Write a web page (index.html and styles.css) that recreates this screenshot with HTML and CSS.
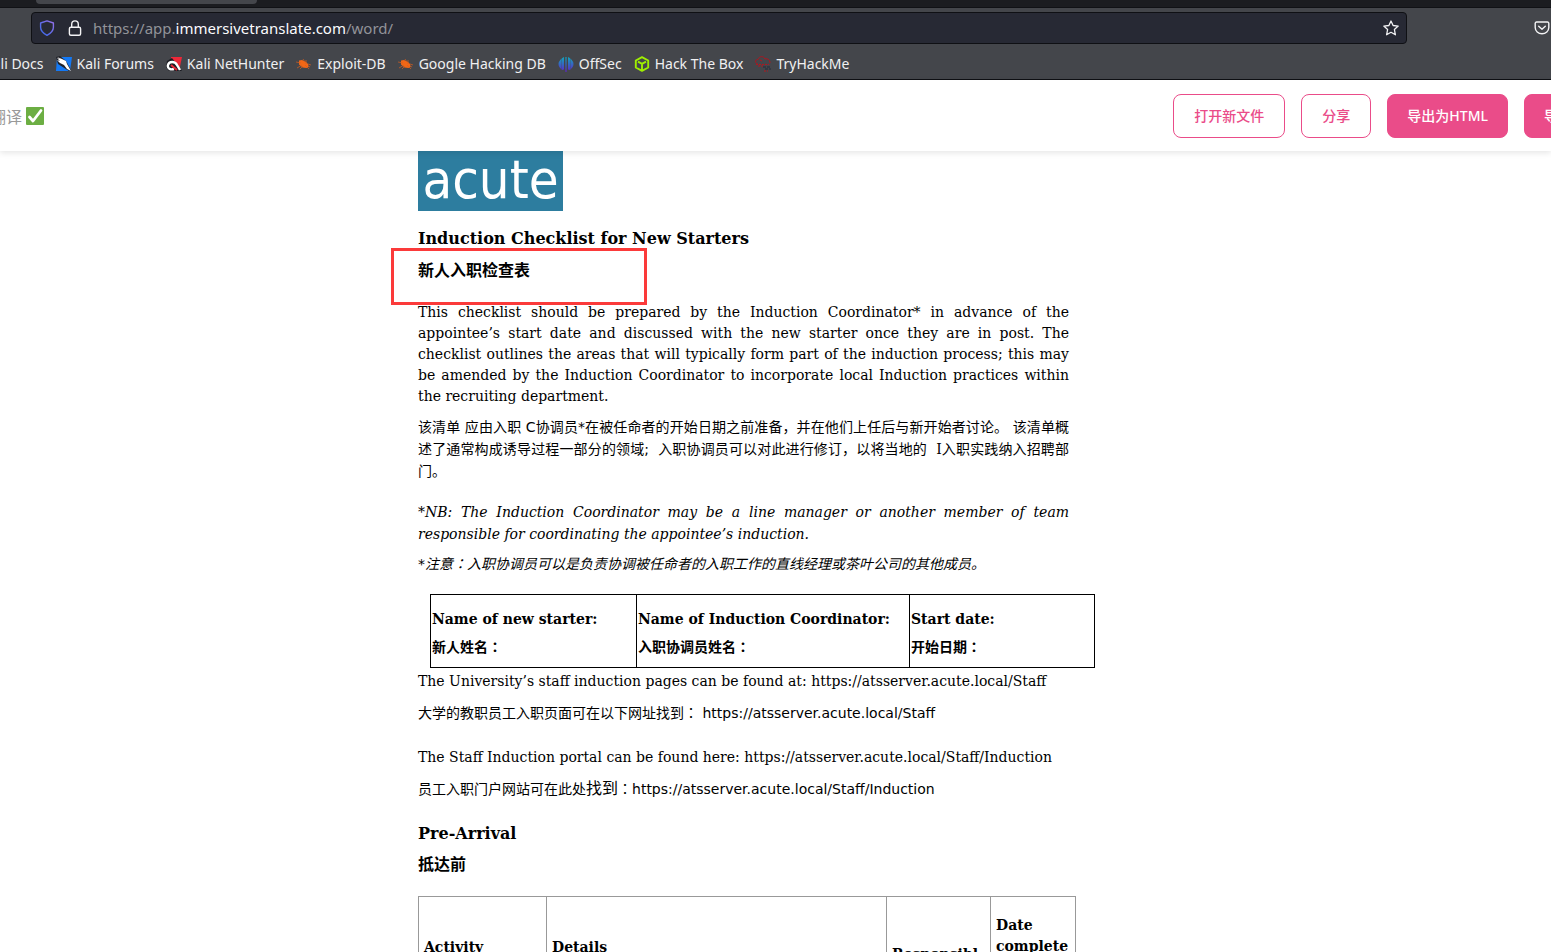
FILE: index.html
```html
<!DOCTYPE html>
<html lang="zh-CN">
<head>
<meta charset="utf-8">
<title>Word 翻译</title>
<link rel="stylesheet" href="styles.css">
</head>
<body>
<div class="browser">
  <div class="tab-strip"><div class="tab"></div></div>
  <div class="nav-bar">
    <div class="url-bar">
      <svg class="icon" viewBox="0 0 16 16" fill="none" stroke="url(#shield)" stroke-width="1.4" stroke-linejoin="round"><defs><linearGradient id="shield" x1="0" y1="1" x2="1" y2="0"><stop stop-color="#3568e8"/><stop offset="1" stop-color="#9470e8"/></linearGradient></defs><path d="M8 .9 14.4 3v4.2c0 3.700-2.500 6-6.400 8.200C4.100 13.200 1.600 10.900 1.600 7.200V3z"/></svg>
      <svg class="icon lock" viewBox="0 0 16 16" fill="none" stroke="#f3f3f5" stroke-width="1.400"><rect x="2.400" y="7.200" width="11.200" height="8" rx="1.500"/><path d="M4.700 7V4.200a3.300 3.300 0 0 1 6.600 0V7"/></svg>
      <div class="url">https://app.<span class="host">immersivetranslate.com</span>/word/</div>
      <button class="icon-button" aria-label="Bookmark"><svg class="icon" viewBox="0 0 16 16" fill="none" stroke="#f3f3f5" stroke-width="1.300" stroke-linejoin="round"><path d="m8 1 2.100 4.500 5.100.6-3.800 3.400 1 5.300L8 12.300l-4.400 2.500 1-5.300L.8 6.100l5.100-.6z"/></svg></button>
    </div>
    <button class="icon-button pocket" aria-label="Pocket"><svg class="icon" viewBox="0 0 16 16" fill="none" stroke="#f3f3f5" stroke-width="1.400" stroke-linecap="round" stroke-linejoin="round"><path d="M2.500 2h11a1.300 1.300 0 0 1 1.300 1.300v4.200a6.800 6.300 0 0 1-13.600 0V3.300A1.300 1.300 0 0 1 2.500 2z"/><path d="m4.700 6.200 3.300 3 3.300-3"/></svg></button>
  </div>
  <nav class="bookmarks">
    <a href="#">Kali Docs</a>
    <a href="#"><svg class="icon" viewBox="0 0 16 16"><path fill="#1479f5" d="M1 1h15l-2 14H0z"/><path fill="#222329" d="m0 1 4-1 6 5 5 9-2 1L2 8z"/><path fill="#fff" d="m1 1 5 2 4 2 1 3 4 7-4-2-3-4-4-2-3-3 3 1-3-3 3 1z"/></svg>Kali Forums</a>
    <a href="#"><svg class="icon" viewBox="0 0 16 16"><path fill="#ed2839" d="M5 1h11l-3 14H5z"/><path fill="#1b1c22" d="m1 5 5-3 10 13H3l-3-4z"/><path fill="none" stroke="#fff" stroke-width="2.400" d="m14 14-3-5C9 5 3 5 2 9s3 5 6 4"/><path fill="none" stroke="#ed2839" stroke-width="2" d="m5 9 6 5"/></svg>Kali NetHunter</a>
    <a href="#"><svg class="icon" viewBox="0 0 16 16"><g id="bug"><path fill="#f26716" d="M3 4.500 6 4l4 2 2 2 .5 3-2 1-4-.5-3.500-3z"/><path stroke="#d95e1c" stroke-width=".7" d="m0 6 5 1M1 12l5-3M4 13l3-3M7 3l2 3M10 4v4M9 9l4 4M12 8l3 1M12 10l2 1"/></g></svg>Exploit-DB</a>
    <a href="#"><svg class="icon" viewBox="0 0 16 16"><use href="#bug"/></svg>Google Hacking DB</a>
    <a href="#"><svg class="icon" viewBox="0 0 16 16"><defs><linearGradient id="off" x1="0" y1="0" x2="0" y2="1"><stop stop-color="#10a6bd"/><stop offset="1" stop-color="#5f22c9"/></linearGradient></defs><path fill="url(#off)" d="M4 2.200 6 1v12.500L4 14C2 12 .5 10.500.5 8S2 4 4 2.200zM7.400 1h1.200v15H7.400zM10 1l2 1.200c2 1.800 3.500 3.300 3.500 5.800s-1.500 4-3.500 6l-2-.5z"/><path stroke="#44464b" stroke-width=".3" d="M3.500 2v12M12.500 2v12"/></svg>OffSec</a>
    <a href="#"><svg class="icon" viewBox="0 0 16 16" fill="none" stroke="#9fef00" stroke-width="1.900" stroke-linejoin="round"><path d="m8 1.200 6.200 3.300v7L8 14.900l-6.200-3.400v-7zM4 5.700l4 2.200 4-2.200M8 8v6"/></svg>Hack The Box</a>
    <a href="#"><svg class="icon" viewBox="0 0 16 16" fill="none"><path stroke="#b2141e" d="M2.500 7.500C-.5 7 0 3.500 3 3.500 4-.2 9-.2 10 3c3-.8 5 1 5 4M5 4l2 1"/><path stroke="#b2141e" stroke-dasharray="2 1" d="M1 8.500h13M3 10h5M9 15h4"/><path stroke="#252a3a" stroke-dasharray="3 1" d="M8 11h7M10 13h6"/></svg>TryHackMe</a>
  </nav>
</div>

<header class="site-header">
  <div class="status">已翻译 <svg class="check" viewBox="0 0 18 18" aria-label="完成"><rect width="18" height="18" rx="1" fill="#6cae43"/><path fill="none" stroke="#fff" stroke-width="2.800" stroke-linecap="round" stroke-linejoin="round" d="m3.500 10 3.500 4 8-10.500"/></svg></div>
  <div class="actions">
    <button class="btn">打开新文件</button>
    <button class="btn">分享</button>
    <button class="btn primary">导出为HTML</button>
    <button class="btn primary last">导出为PDF</button>
  </div>
</header>

<main class="viewer">
  <article class="doc">
    <div class="logo"><span>acute</span></div>
    <div class="heading">
      <h1>Induction Checklist for New Starters</h1>
      <h1 class="zh">新人入职检查表</h1>
      <div class="marker"></div>
    </div>
    <p class="intro">This checklist should be prepared by the Induction Coordinator* in advance of the appointee’s start date and discussed with the new starter once they are in post. The checklist outlines the areas that will typically form part of the induction process; this may be amended by the Induction Coordinator to incorporate local Induction practices within the recruiting department.</p>
    <p class="zh intro-zh">该清单 应由入职 C协调员*在被任命者的开始日期之前准备，并在他们上任后与新开始者讨论。 该清单概述了通常构成诱导过程一部分的领域;&nbsp; 入职协调员可以对此进行修订，以将当地的&nbsp; <span class="serif">I</span>入职实践纳入招聘部门。</p>
    <p class="note"><em>*NB: The Induction Coordinator may be a line manager or another member of team responsible for coordinating the appointee’s induction.</em></p>
    <p class="zh note-zh"><em>*注意<span class="mid" lang="zh-TW">：</span>入职协调员可以是负责协调被任命者的入职工作的直线经理或茶叶公司的其他成员。</em></p>
    <table class="people">
      <colgroup><col class="starter"><col class="coordinator"><col></colgroup>
      <tr>
        <th><p>Name of new starter:</p><p class="zh">新人姓名<span class="mid" lang="zh-TW">：</span></p></th>
        <th><p>Name of Induction Coordinator:</p><p class="zh">入职协调员姓名<span class="mid" lang="zh-TW">：</span></p></th>
        <th><p>Start date:</p><p class="zh">开始日期<span class="mid" lang="zh-TW">：</span></p></th>
      </tr>
    </table>
    <p class="line">The University’s staff induction pages can be found at: https://atsserver.acute.local/Staff</p>
    <p class="zh line-zh">大学的教职员工入职页面可在以下网址找到<span class="mid" lang="zh-TW">：</span> https://atsserver.acute.local/Staff</p>
    <p class="line">The Staff Induction portal can be found here: https://atsserver.acute.local/Staff/Induction</p>
    <p class="zh line-zh">员工入职门户网站可在此处<span class="large">找到</span><span class="mid" lang="zh-TW">：</span>https://atsserver.acute.local/Staff/Induction</p>
    <h2>Pre-Arrival</h2>
    <h2 class="zh">抵达前</h2>
    <table class="tasks">
      <colgroup><col class="activity"><col><col class="owner"><col class="date"></colgroup>
      <tr><th class="level">Activity</th><th class="level">Details</th><th class="low">Responsibl</th><th>Date complete</th></tr>
    </table>
  </article>
</main>
</body>
</html>
```
FILE: styles.css
```css
* { box-sizing: border-box; }
body {
  margin: 0;
  height: 100vh;
  display: flex;
  flex-direction: column;
  overflow: hidden;
  background: #fff;
  color: #000;
}
button { font: inherit; cursor: pointer; }
.icon { width: 16px; height: 16px; flex: none; display: block; }

/* Browser chrome */
.browser {
  flex: none;
  background: #44464b;
  border-bottom: 1px solid #0f1014;
  font: 14px/20px "Noto Sans", sans-serif;
  color: #f0f0f1;
}
.tab-strip { height: 8px; background: #1b1c20; border-bottom: 1px solid #101115; padding-left: 36px; }
.tab { width: 221px; height: 4px; background: #44464b; border-radius: 0 0 4px 4px; }
.nav-bar { display: flex; align-items: center; padding: 4px 0 4px 31px; }
.url-bar {
  flex: 1;
  height: 32px;
  display: flex;
  align-items: center;
  padding: 0 7px;
  background: #272934;
  border: 1px solid #0f1014;
  border-radius: 4px;
}
.lock { margin: 0 10px 0 12px; }
.url { flex: 1; font-size: 15px; color: #929399; }
.host { color: #fbfbfe; }
.icon-button { padding: 0; border: 0; background: none; }
.pocket { margin: 0 1px 0 127px; }
.bookmarks { display: flex; gap: 12px; height: 31px; align-items: center; margin-left: -16px; white-space: nowrap; }
.bookmarks a { display: flex; align-items: center; gap: 5px; color: inherit; text-decoration: none; }

/* Site header */
.site-header {
  flex: none;
  position: relative;
  z-index: 1;
  height: 71px;
  display: flex;
  align-items: center;
  justify-content: space-between;
  background: #fff;
  box-shadow: 0 2px 6px rgba(0, 0, 0, .1);
  font-family: "Noto Sans", "Noto Sans CJK SC", sans-serif;
}
.status { display: flex; align-items: center; gap: 4px; margin-left: -26px; font-size: 16px; color: #999; }
.check { width: 18px; height: 18px; }
.actions { display: flex; gap: 16px; margin-right: -94px; }
.btn {
  height: 44px;
  padding: 0 20px 2px;
  border: 1px solid #ea4c89;
  border-radius: 8px;
  background: #fff;
  color: #ea4c89;
  font-size: 14px;
  font-weight: 500;
  white-space: nowrap;
}
.primary { padding: 0 19px 2px; background: #ea4c89; color: #fff; }
.last { width: 121px; text-align: left; }

/* Document */
.viewer { flex: 1; min-height: 0; overflow: hidden; padding-left: 418px; }
.doc { max-width: 651px; font: 14px/21px "DejaVu Serif", "Noto Sans CJK SC", serif; }
.doc p, .doc h1, .doc h2 { margin: 0; }
.doc h1, .doc h2 { font-size: 16px; line-height: 24px; font-weight: bold; }
.doc .zh { font-family: "DejaVu Sans", "Noto Sans CJK SC", sans-serif; }
.mid { font-family: "Noto Sans CJK TC", sans-serif; line-height: 0; }
.doc .serif { font-family: "DejaVu Serif", serif; line-height: 0; }
.large { font-size: 16px; line-height: 0; }

.logo {
  width: 145px;
  height: 60px;
  display: flex;
  align-items: flex-end;
  justify-content: center;
  overflow: hidden;
  padding-bottom: 4px;
  background: #2d7d9f;
  color: #fff;
  font: 54px/54px "DejaVu Sans Condensed", sans-serif;
}
.heading { position: relative; padding-top: 16px; display: grid; gap: 8px; margin-bottom: 19px; }
.marker {
  position: absolute;
  left: -27px;
  top: 37px;
  width: 256px;
  height: 57px;
  border: 3px solid #fb3a3a;
}
.intro, .intro-zh, .note { text-align: justify; }
.doc .intro { margin-bottom: 9px; }
.doc .intro-zh { line-height: 22px; margin-bottom: 19px; }
.doc .note { line-height: 22px; margin-bottom: 8px; }
.doc .note-zh { line-height: 22px; margin-bottom: 19px; }
.doc .line { line-height: 22px; margin-bottom: 10px; }
.doc .line-zh { line-height: 22px; margin-bottom: 22px; }
.doc h2 { line-height: 23px; margin-bottom: 8px; }
.doc h2.zh { margin-bottom: 20px; }

table { table-layout: fixed; border-collapse: collapse; font: inherit; }
th { text-align: left; vertical-align: top; }
.people { width: 665px; margin: 0 0 2px 12px; }
.people th { border: 1px solid #000; padding: 14px 1px 9px; }
.people th p + p { margin-top: 7px; }
.starter { width: 206px; }
.coordinator { width: 273px; }
.tasks { width: 658px; }
.tasks th { border: 1px solid #999; padding: 18px 5px; }
.tasks .level { padding-top: 40px; }
.tasks .low { padding-top: 47px; white-space: nowrap; }
.activity { width: 128px; }
.owner { width: 104px; }
.date { width: 85px; }
```
